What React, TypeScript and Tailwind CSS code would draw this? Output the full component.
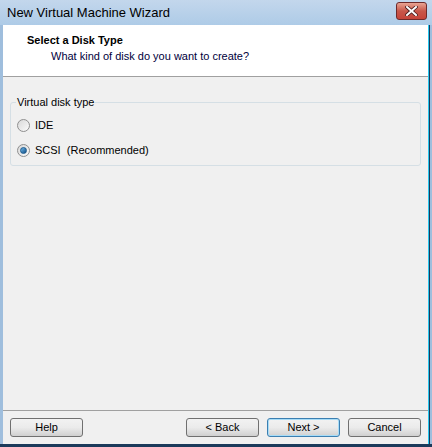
const font = { fontFamily: '"Liberation Sans", Arial, sans-serif' };

const Radio = ({ checked, label }: { checked?: boolean; label: React.ReactNode }) => (
  <div className="flex items-center gap-[5px] h-[14px]">
    <span className="w-[13px] h-[13px] rounded-full border border-[#8f8f8f] bg-gradient-to-br from-[#d8d8d8] to-[#fbfbfb] flex items-center justify-center">
      {checked && (
        <span className="w-[7px] h-[7px] rounded-full bg-gradient-to-br from-[#6fb9ea] to-[#0f4f86] border border-[#1c5a8d]" />
      )}
    </span>
    <span className="text-[11px] text-black leading-none">{label}</span>
  </div>
);

const Button = ({ children, focused }: { children: React.ReactNode; focused?: boolean }) => (
  <button
    className={`w-[73px] h-[19px] rounded-[3px] border text-[11px] text-black leading-none bg-gradient-to-b from-[#f2f2f2] via-[#ebebeb] to-[#d0d0d0] ${
      focused ? "border-[#3c7fb1] shadow-[inset_0_0_0_1px_#a7dcf7]" : "border-[#707070]"
    }`}
  >
    {children}
  </button>
);

export default function App() {
  return (
    <div style={font} className="w-[432px] h-[447px] bg-[#9fbedd] flex flex-col overflow-hidden">
      <div className="h-[25px] flex items-center justify-between pl-[7px] pr-[5px] bg-gradient-to-b from-[#c3d7ec] to-[#aecbe7]">
        <span className="text-[13px] text-black">New Virtual Machine Wizard</span>
        <button className="w-[31px] h-[18px] mb-[3px] rounded-[3px] border border-[#6e2a2a] bg-gradient-to-b from-[#e8a493] via-[#c8574a] to-[#c6443a] flex items-center justify-center">
          <svg width="13" height="10" viewBox="0 0 13 10">
            <path d="M2 1 L11 9 M11 1 L2 9" stroke="#4a1d1d" strokeWidth="3.6" strokeLinecap="square" />
            <path d="M2 1 L11 9 M11 1 L2 9" stroke="#ffffff" strokeWidth="2" strokeLinecap="square" />
          </svg>
        </button>
      </div>
      <div className="flex-1 flex ml-[3px] mr-[2px] border-r border-[#1b3a5a]">
        <div className="flex-1 flex flex-col bg-[#f0f0f0]">
          <div className="h-[52px] bg-white border-b border-[#a0a0a0] pl-[24px] pt-[8px]">
            <div className="text-[11px] font-bold text-black leading-[14px]">Select a Disk Type</div>
            <div className="text-[11px] text-[#00003c] leading-[14px] mt-[2px] pl-[24px]">
              What kind of disk do you want to create?
            </div>
          </div>
          <div className="flex-1 px-[7px] pt-[20px]">
            <fieldset className="border border-[#d5dfe5] rounded-[3px] h-[69px] pl-[6px] pr-[6px] w-[411px]">
              <legend className="text-[11px] text-black leading-none px-[1px] ml-[-1px]">Virtual disk type</legend>
              <div className="flex flex-col gap-[11px] pt-[10px]">
                <Radio label="IDE" />
                <Radio checked label={<>SCSI&nbsp;&nbsp;(Recommended)</>} />
              </div>
            </fieldset>
          </div>
          <div className="h-[34px] border-t border-[#a0a0a0] flex items-start pt-[7px] px-[7px]">
            <Button>Help</Button>
            <div className="flex-1" />
            <div className="flex gap-[8px]">
              <Button>&lt; Back</Button>
              <Button focused>Next &gt;</Button>
              <Button>Cancel</Button>
            </div>
          </div>
        </div>
        <div className="w-[2px] bg-[#28c8f0]" />
      </div>
      <div className="h-[3px] bg-[#1b3a5a]" />
    </div>
  );
}
